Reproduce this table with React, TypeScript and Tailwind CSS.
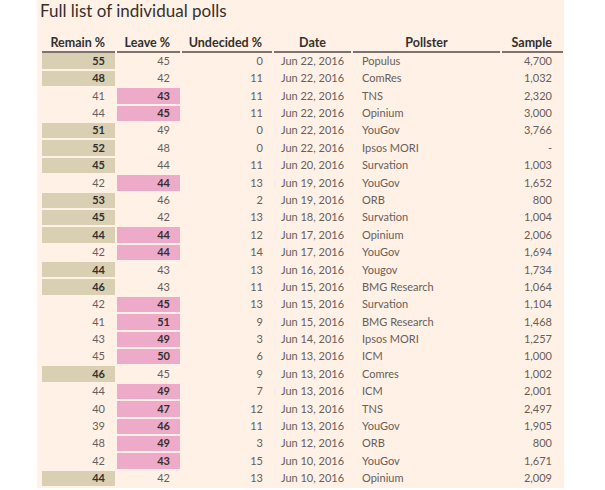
import React from 'react'

type Poll = {
  remain: number
  leave: number
  undecided: number
  date: string
  pollster: string
  sample: string
}

const POLLS: Poll[] = [
  { remain: 55, leave: 45, undecided: 0, date: 'Jun 22, 2016', pollster: 'Populus', sample: '4,700' },
  { remain: 48, leave: 42, undecided: 11, date: 'Jun 22, 2016', pollster: 'ComRes', sample: '1,032' },
  { remain: 41, leave: 43, undecided: 11, date: 'Jun 22, 2016', pollster: 'TNS', sample: '2,320' },
  { remain: 44, leave: 45, undecided: 11, date: 'Jun 22, 2016', pollster: 'Opinium', sample: '3,000' },
  { remain: 51, leave: 49, undecided: 0, date: 'Jun 22, 2016', pollster: 'YouGov', sample: '3,766' },
  { remain: 52, leave: 48, undecided: 0, date: 'Jun 22, 2016', pollster: 'Ipsos MORI', sample: '-' },
  { remain: 45, leave: 44, undecided: 11, date: 'Jun 20, 2016', pollster: 'Survation', sample: '1,003' },
  { remain: 42, leave: 44, undecided: 13, date: 'Jun 19, 2016', pollster: 'YouGov', sample: '1,652' },
  { remain: 53, leave: 46, undecided: 2, date: 'Jun 19, 2016', pollster: 'ORB', sample: '800' },
  { remain: 45, leave: 42, undecided: 13, date: 'Jun 18, 2016', pollster: 'Survation', sample: '1,004' },
  { remain: 44, leave: 44, undecided: 12, date: 'Jun 17, 2016', pollster: 'Opinium', sample: '2,006' },
  { remain: 42, leave: 44, undecided: 14, date: 'Jun 17, 2016', pollster: 'YouGov', sample: '1,694' },
  { remain: 44, leave: 43, undecided: 13, date: 'Jun 16, 2016', pollster: 'Yougov', sample: '1,734' },
  { remain: 46, leave: 43, undecided: 11, date: 'Jun 15, 2016', pollster: 'BMG Research', sample: '1,064' },
  { remain: 42, leave: 45, undecided: 13, date: 'Jun 15, 2016', pollster: 'Survation', sample: '1,104' },
  { remain: 41, leave: 51, undecided: 9, date: 'Jun 15, 2016', pollster: 'BMG Research', sample: '1,468' },
  { remain: 43, leave: 49, undecided: 3, date: 'Jun 14, 2016', pollster: 'Ipsos MORI', sample: '1,257' },
  { remain: 45, leave: 50, undecided: 6, date: 'Jun 13, 2016', pollster: 'ICM', sample: '1,000' },
  { remain: 46, leave: 45, undecided: 9, date: 'Jun 13, 2016', pollster: 'Comres', sample: '1,002' },
  { remain: 44, leave: 49, undecided: 7, date: 'Jun 13, 2016', pollster: 'ICM', sample: '2,001' },
  { remain: 40, leave: 47, undecided: 12, date: 'Jun 13, 2016', pollster: 'TNS', sample: '2,497' },
  { remain: 39, leave: 46, undecided: 11, date: 'Jun 13, 2016', pollster: 'YouGov', sample: '1,905' },
  { remain: 48, leave: 49, undecided: 3, date: 'Jun 12, 2016', pollster: 'ORB', sample: '800' },
  { remain: 42, leave: 43, undecided: 15, date: 'Jun 10, 2016', pollster: 'YouGov', sample: '1,671' },
  { remain: 44, leave: 42, undecided: 13, date: 'Jun 10, 2016', pollster: 'Opinium', sample: '2,009' },
]

const HEADERS = [
  { label: 'Remain %', align: 'justify-end pr-[10px]' },
  { label: 'Leave %', align: 'justify-end pr-[10px]' },
  { label: 'Undecided %', align: 'justify-end pr-[10px]' },
  { label: 'Date', align: 'justify-center' },
  { label: 'Pollster', align: 'justify-center' },
  { label: 'Sample', align: 'justify-end pr-[11px]' },
]

const cell = 'flex items-center'

export default function App() {
  return (
    <div className="h-[490px] w-[605px] bg-white font-['Lato',sans-serif]">
      <div className="ml-[37px] h-[488px] w-[527px] bg-[#fff1e5] pl-[5px]">
        <h1 className="-ml-[2px] pt-[1px] text-[17px] leading-[20px] font-normal text-[#33302e]">
          Full list of individual polls
        </h1>

        <div className="mt-[15px] grid auto-rows-[15.4px] grid-cols-[73px_63px_90px_77px_147px_61px] gap-x-[2px] gap-y-[2px] text-[11px]">
          {HEADERS.map((h) => (
            <div
              key={h.label}
              className={`${cell} ${h.align} h-[17px] border-b-2 border-[#7a736e] pb-[1px] text-[12.5px] font-bold text-[#33302e]`}
            >
              {h.label}
            </div>
          ))}

          {POLLS.map((p, i) => {
            const remainWins = p.remain >= p.leave
            const leaveWins = p.leave >= p.remain
            return (
              <React.Fragment key={i}>
                <div
                  className={`${cell} justify-end pr-[10px] ${
                    remainWins ? 'bg-[#d9cfb3] font-bold text-[#33302e]' : 'text-[#66605c]'
                  }`}
                >
                  {p.remain}
                </div>
                <div
                  className={`${cell} justify-end pr-[10px] ${
                    leaveWins ? 'bg-[#eeaac9] font-bold text-[#33302e]' : 'text-[#66605c]'
                  }`}
                >
                  {p.leave}
                </div>
                <div className={`${cell} justify-end pr-[9px] text-[#66605c]`}>{p.undecided}</div>
                <div className={`${cell} justify-center text-[#66605c]`}>{p.date}</div>
                <div className={`${cell} pl-[9px] text-[#66605c]`}>{p.pollster}</div>
                <div className={`${cell} justify-end pr-[11px] text-[#66605c]`}>{p.sample}</div>
              </React.Fragment>
            )
          })}
        </div>
      </div>
    </div>
  )
}
